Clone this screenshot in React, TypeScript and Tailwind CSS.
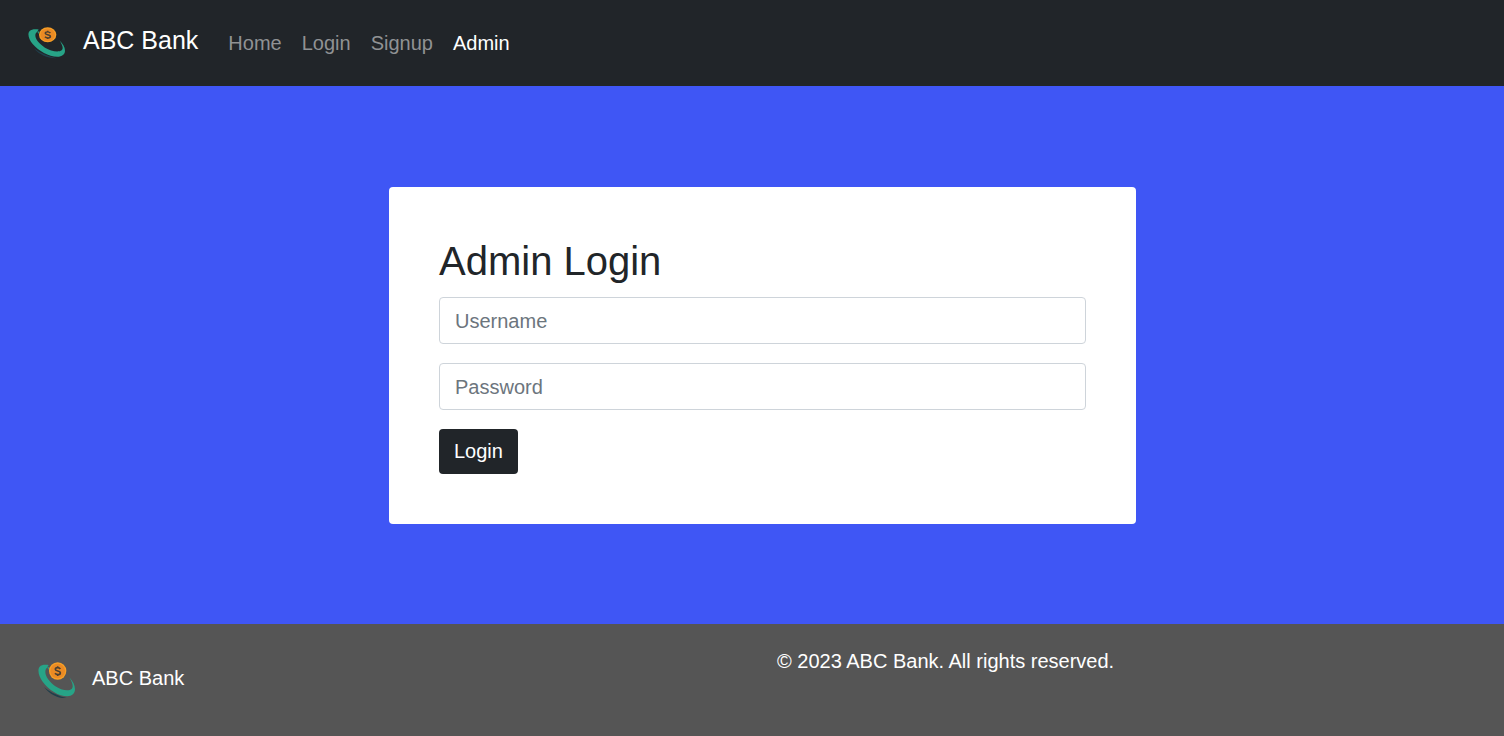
import React from "react";

function Logo({ className }: { className: string }) {
  return (
    <svg
      viewBox="24 24 114 111"
      preserveAspectRatio="none"
      className={className}
      aria-hidden="true"
    >
      <path
        d="M42 99C60 123 86 134 110 132C88 127 64 117 42 99Z"
        fill="#203f4b"
      />
      <path
        d="M55 48L58 39L51 41L56 33C45 31 34 32 29 38C21 48 27 68 38 83C56 107 86 127 112 127C126 127 135 118 135 106C135 94 129 83 118 70C128 88 131 98 125 105C116 113 93 109 75 96C59 84 46 68 46 53C46 46 49 41 53 41Z"
        fill="#27a487"
      />
      <circle cx="83" cy="51" r="26" fill="#f79f26" />
      <circle cx="83" cy="51" r="22" fill="#ea8a24" />
      <path
        d="M91 45C88 40 76 39 76 46C76 53 91 49 91 57C91 64 79 63 75 58M83 37V42M83 61V66"
        fill="none"
        stroke="#4b4031"
        strokeWidth="5"
      />
    </svg>
  );
}

const links = [
  { label: "Home", active: false },
  { label: "Login", active: false },
  { label: "Signup", active: false },
  { label: "Admin", active: true },
];

const inputClass =
  "block w-full rounded-[4px] border border-[#ced4da] bg-white px-[15px] pt-[9px] pb-[7px] text-[20px] leading-[29px] text-[#212529] placeholder:text-[#6c757d] placeholder:opacity-100";

export default function App() {
  return (
    <div className="flex min-h-screen flex-col bg-[#3f56f5] font-['Liberation_Sans',Arial,sans-serif] text-[20px] leading-[30px]">
      <header className="flex items-center bg-[#212529] px-7 py-[22px]">
        <a href="#" className="flex items-center gap-[17px] text-[25px] leading-[36px] text-white">
          <Logo className="h-8 w-[38px]" />
          <span className="pb-[6px]">ABC Bank</span>
        </a>
        <nav className="ml-[30px] flex gap-5">
          {links.map((link) => (
            <a
              key={link.label}
              href="#"
              aria-current={link.active ? "page" : undefined}
              className={link.active ? "text-white" : "text-[#909294]"}
            >
              {link.label}
            </a>
          ))}
        </nav>
      </header>

      <main className="flex grow items-center justify-center pt-px pl-[21px]">
        <form
          className="w-full max-w-[747px] rounded-[4px] bg-white p-[50px]"
          onSubmit={(event) => event.preventDefault()}
        >
          <h1 className="mb-3 text-[40px] leading-[48px] text-[#212529]">Admin Login</h1>
          <div className="flex flex-col items-start gap-[19px]">
            <input type="text" aria-label="Username" placeholder="Username" className={inputClass} />
            <input type="password" aria-label="Password" placeholder="Password" className={inputClass} />
            <button type="submit" className="rounded-[4px] bg-[#212529] px-[15px] pt-[7px] pb-2 text-white">
              Login
            </button>
          </div>
        </form>
      </main>

      <footer className="grid grid-cols-2 bg-[#555555] text-white">
        <div className="flex items-center gap-4 px-[38px] pt-[38px] pb-[37px]">
          <Logo className="h-[37px] w-[38px]" />
          <span className="pb-[6px]">ABC Bank</span>
        </div>
        <p className="px-[25px] py-[22px]">© 2023 ABC Bank. All rights reserved.</p>
      </footer>
    </div>
  );
}
